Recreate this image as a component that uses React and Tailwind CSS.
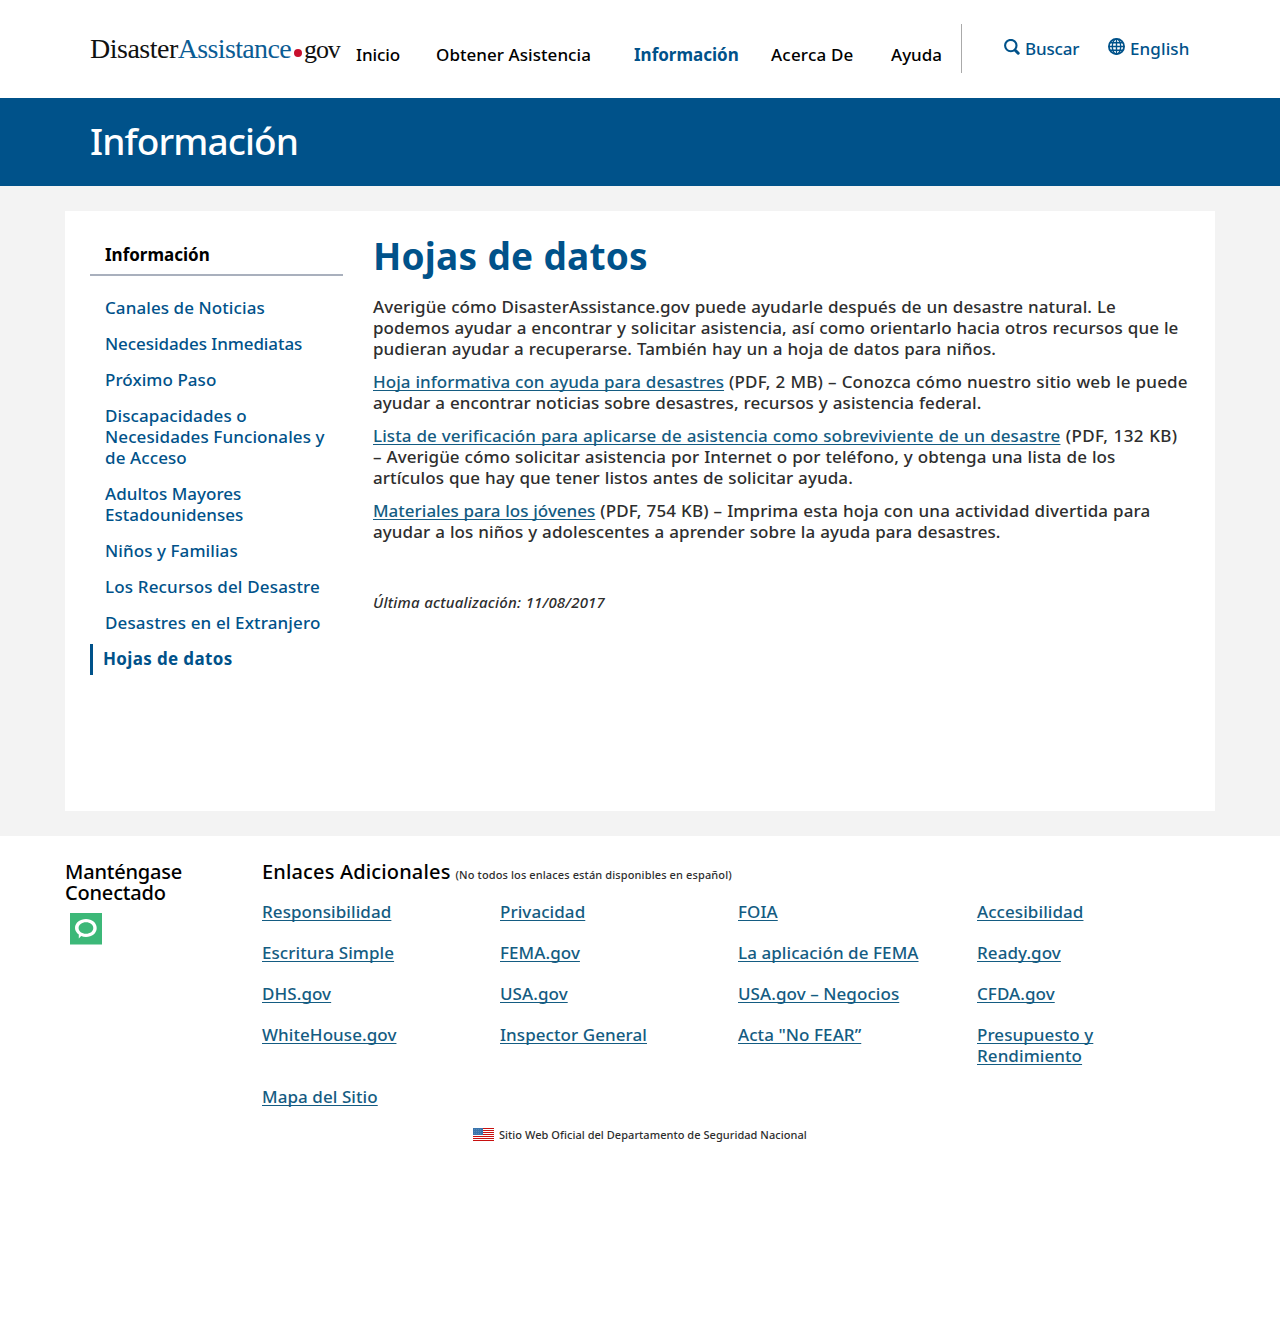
import React from "react";

const navItems = [
  { label: "Inicio", cls: "w-20 tracking-[-0.1px]" },
  { label: "Obtener Asistencia", cls: "w-[198px] tracking-[0.05px]" },
  { label: "Información", cls: "w-[137px] font-bold text-[#00528a]" },
  { label: "Acerca De", cls: "w-[120px] tracking-[0.2px]" },
  { label: "Ayuda", cls: "w-[70px]" },
];

const sideItems = [
  { label: "Canales de Noticias", cls: "tracking-[0.08px]" },
  { label: "Necesidades Inmediatas", cls: "tracking-[-0.08px]" },
  { label: "Próximo Paso", cls: "tracking-[0.05px]" },
  { label: "Discapacidades o Necesidades Funcionales y de Acceso", cls: "tracking-[0.1px]" },
  { label: "Adultos Mayores Estadounidenses", cls: "tracking-[0.02px]" },
  { label: "Niños y Familias", cls: "tracking-[0.08px]" },
  { label: "Los Recursos del Desastre", cls: "tracking-[0.16px]" },
  { label: "Desastres en el Extranjero", cls: "tracking-[0.14px]" },
];

const footerLinks = [
  "Responsibilidad", "Privacidad", "FOIA", "Accesibilidad",
  "Escritura Simple", "FEMA.gov", "La aplicación de FEMA", "Ready.gov",
  "DHS.gov", "USA.gov", "USA.gov – Negocios", "CFDA.gov",
  "WhiteHouse.gov", "Inspector General", "Acta \"No FEAR”", "Presupuesto y Rendimiento",
  "Mapa del Sitio",
];

function Link({ children, className = "" }) {
  return (
    <a href="#" className={"text-[#145c82] underline decoration-1 underline-offset-[1.5px] [text-decoration-skip-ink:none] " + className}>
      {children}
    </a>
  );
}

function Logo() {
  return (
    <div className="flex w-[266px] items-baseline pt-[34px] font-['Liberation_Serif',serif] text-[28px] leading-[30px] text-[#111]">
      <span className="tracking-[-0.5px]">Disaster</span>
      <span className="tracking-[-0.65px] text-[#0b5c94]">Assistance</span>
      <span className="ml-[3px] mr-[2px] size-2 -translate-y-px rounded-full bg-[#c8102e]" />
      <span className="text-[26px] tracking-[-1.1px]">gov</span>
    </div>
  );
}

function SearchIcon() {
  return (
    <svg className="mt-[39px] h-[17px] w-[17px]" viewBox="0 0 17 17" fill="none" stroke="#00528a">
      <circle cx="6.8" cy="6.6" r="5.7" strokeWidth="2.1" />
      <path d="M11.200 11.200l3 3" strokeWidth="3" strokeLinecap="round" />
    </svg>
  );
}

function GlobeIcon() {
  return (
    <svg className="mt-[38px] h-[17px] w-[17px]" viewBox="0 0 17 17" fill="none" stroke="#00528a" strokeWidth="1.4">
      <circle cx="8.5" cy="8.5" r="7.6" strokeWidth="1.8" />
      <ellipse cx="8.5" cy="8.5" rx="4.2" ry="7.6" />
      <path d="M8.5 1v15M1 8.5h15M2 4.8h13M2 12.2h13" />
    </svg>
  );
}

function Flag() {
  return (
    <svg className="-mt-[1px] mb-px h-[13px] w-[21px]" viewBox="0 0 21 13">
      <rect width="21" height="13" fill="#fff" />
      <path d="M0 0h21v1H0zM0 2h21v1H0zM0 4h21v1H0zM0 6h21v1H0zM0 8h21v1H0zM0 10h21v1H0zM0 12h21v1H0z" fill="#c8100f" />
      <rect width="10" height="7" fill="#3b75ad" />
      <path d="M1 1.5h8M1 3.5h8M1 5.5h8" stroke="#5589b8" strokeDasharray="1 1" />
    </svg>
  );
}

export default function App() {
  return (
    <div className="h-[1329px] w-[1280px] overflow-hidden bg-white font-['Noto_Sans',sans-serif] text-[17px] font-medium leading-[21px] text-[#2e2e2e]">
      <header className="flex h-[98px] pl-[90px]">
        <Logo />
        <nav className="flex pt-[44px] text-black">
          {navItems.map((n) => (
            <a key={n.label} href="#" className={"whitespace-nowrap " + n.cls}>{n.label}</a>
          ))}
        </nav>
        <div className="mt-6 h-[49px] w-px bg-[#aaa]" />
        <div className="ml-[42px] flex text-[#00528a]">
          <SearchIcon />
          <a href="#" className="ml-1 mt-[38px] w-[83px] tracking-[-0.15px]">Buscar</a>
          <GlobeIcon />
          <a href="#" className="ml-[5px] mt-[38px] tracking-[0.1px]">English</a>
        </div>
      </header>

      <div className="h-[88px] bg-[#00528a] pl-[90px] pt-[18px] text-[37px] leading-[50px] tracking-[-0.9px] text-white">
        Información
      </div>

      <main className="h-[650px] bg-[#f3f3f3] px-[65px] py-[25px]">
        <div className="flex h-[600px] bg-white pl-[25px]">
          <aside className="w-[253px] pt-[33px]">
            <h2 className="h-8 border-b-2 border-[#a9b0bd] pl-[15px] font-bold text-black">Información</h2>
            <ul className="mt-4 flex flex-col gap-[5px] text-[#00528a]">
              {sideItems.map((s) => (
                <li key={s.label} className={"py-[5px] pl-[15px] pr-3 " + s.cls}>{s.label}</li>
              ))}
              <li className="mt-px border-l-[3px] border-[#00528a] pb-[6px] pl-[10px] pt-1 font-bold tracking-[0.35px]">Hojas de datos</li>
            </ul>
          </aside>
          <article className="ml-[30px] w-[820px] whitespace-nowrap pt-5 tracking-[0.08px] [word-spacing:0.4px]">
            <h1 className="h-[65px] text-[37px] font-bold leading-[50px] tracking-[0.2px] text-[#00528a]">Hojas de datos</h1>
            <div className="flex flex-col gap-3">
              <p>
                Averigüe cómo DisasterAssistance.gov puede ayudarle después de un desastre natural. Le<br />
                podemos ayudar a encontrar y solicitar asistencia, así como orientarlo hacia otros recursos que le<br />
                pudieran ayudar a recuperarse. También hay un a hoja de datos para niños.
              </p>
              <p>
                <Link className="tracking-[0.03px]">Hoja informativa con ayuda para desastres</Link><span className="tracking-[0.17px]"> (PDF, 2 MB) – Conozca cómo nuestro sitio web le puede</span><br />
                ayudar a encontrar noticias sobre desastres, recursos y asistencia federal.
              </p>
              <p>
                <Link>Lista de verificación para aplicarse de asistencia como sobreviviente de un desastre</Link><span className="tracking-[0.4px]"> (PDF, 132 KB)</span><br />
                – Averigüe cómo solicitar asistencia por Internet o por teléfono, y obtenga una lista de los<br />
                artículos que hay que tener listos antes de solicitar ayuda.
              </p>
              <p>
                <Link className="tracking-[0px]">Materiales para los jóvenes</Link><span className="tracking-[0.13px]"> (PDF, 754 KB) – Imprima esta hoja con una actividad divertida para</span><br />
                ayudar a los niños y adolescentes a aprender sobre la ayuda para desastres.
              </p>
            </div>
            <p className="mt-[50px] text-[15px] italic tracking-[0.2px]">Última actualización: 11/08/2017</p>
          </article>
        </div>
      </main>

      <footer className="px-[65px] pt-[25px]">
        <div className="flex">
          <div className="w-[197px] text-[20px] leading-[21px] text-black">
            <h2 className="w-[130px] tracking-[-0.2px]">Manténgase Conectado</h2>
            <svg className="ml-[5px] mt-[10px] h-8 w-8" viewBox="0 0 32 32">
              <rect width="32" height="31.500" fill="#3cb878" />
              <path fill="#fff" fillRule="evenodd" d="M16 6c6 0 10.700 3.800 10.700 9s-4.700 9-10.700 9c-1.800 0-3.400-.3-4.800-.9L8.800 25.500v-4C6.500 19.900 5 17.600 5 15c0-5.200 5-9 11-9zm0 3.200c-4.200 0-7.400 2.500-7.400 5.800s3.200 5.800 7.400 5.800 7.300-2.500 7.300-5.800-3.100-5.800-7.300-5.800z" />
            </svg>
          </div>
          <div>
            <h2 className="flex h-[21px] items-baseline text-[20px] leading-[21px] tracking-[0.15px] text-black">
              Enlaces Adicionales
              <span className="ml-[5px] text-[11px] tracking-[0.12px] text-[#2e2e2e]">(No todos los enlaces están disponibles en español)</span>
            </h2>
            <div className="mt-[19px] grid grid-cols-[238px_238px_239px_160px] gap-y-5 tracking-[0.07px]">
              {footerLinks.map((l) => (
                <div key={l}><Link>{l}</Link></div>
              ))}
            </div>
          </div>
        </div>
        <div className="ml-[408px] mt-[18px] flex items-center gap-[5px] text-[11px] leading-[20px] tracking-[0.04px]">
          <Flag />
          <span>Sitio Web Oficial del Departamento de Seguridad Nacional</span>
        </div>
      </footer>
    </div>
  );
}
